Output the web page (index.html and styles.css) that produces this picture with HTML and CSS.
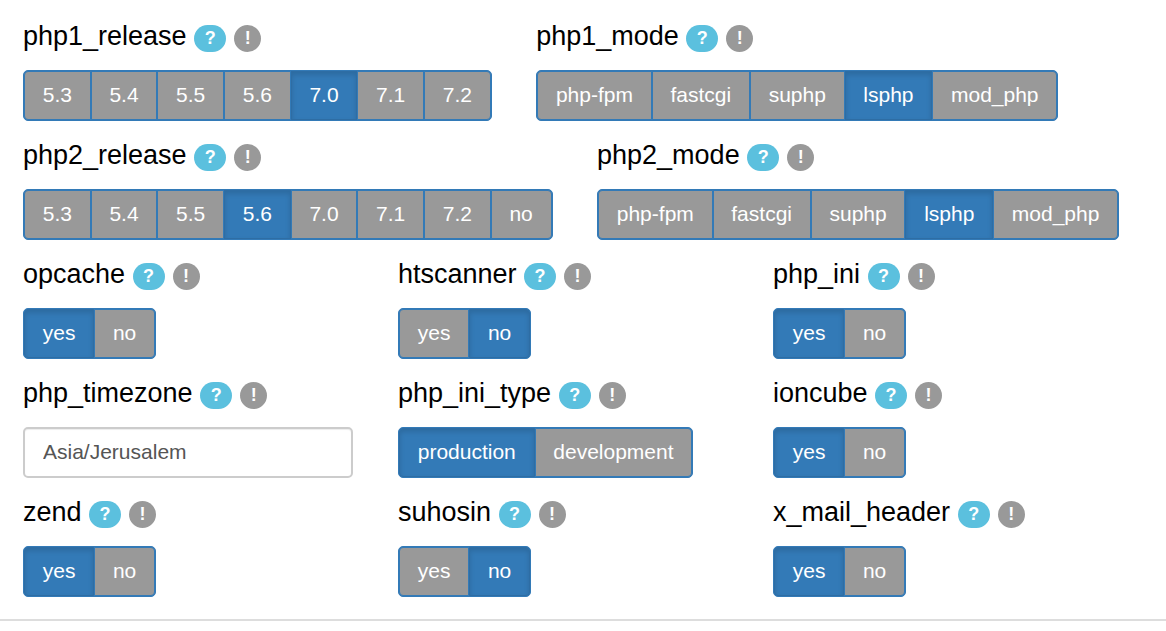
FILE: index.html
```html
<!DOCTYPE html>
<html lang="en">
<head>
<meta charset="utf-8">
<title>PHP settings</title>
<link rel="stylesheet" href="styles.css">
</head>
<body>
<main class="panel">
  <div class="row row-wide">
    <div class="field">
      <div class="label">php1_release <span class="hint">?</span><span class="warn">!</span></div>
      <div class="group"><button>5.3</button><button>5.4</button><button>5.5</button><button>5.6</button><button class="on">7.0</button><button>7.1</button><button>7.2</button></div>
    </div>
    <div class="field">
      <div class="label">php1_mode <span class="hint">?</span><span class="warn">!</span></div>
      <div class="group"><button>php-fpm</button><button>fastcgi</button><button>suphp</button><button class="on">lsphp</button><button>mod_php</button></div>
    </div>
  </div>
  <div class="row row-wide">
    <div class="field">
      <div class="label">php2_release <span class="hint">?</span><span class="warn">!</span></div>
      <div class="group"><button>5.3</button><button>5.4</button><button>5.5</button><button class="on">5.6</button><button>7.0</button><button>7.1</button><button>7.2</button><button>no</button></div>
    </div>
    <div class="field">
      <div class="label">php2_mode <span class="hint">?</span><span class="warn">!</span></div>
      <div class="group"><button>php-fpm</button><button>fastcgi</button><button>suphp</button><button class="on">lsphp</button><button>mod_php</button></div>
    </div>
  </div>
  <div class="row row-thirds">
    <div class="field">
      <div class="label">opcache <span class="hint">?</span><span class="warn">!</span></div>
      <div class="group"><button class="on">yes</button><button>no</button></div>
    </div>
    <div class="field">
      <div class="label">htscanner <span class="hint">?</span><span class="warn">!</span></div>
      <div class="group"><button>yes</button><button class="on">no</button></div>
    </div>
    <div class="field">
      <div class="label">php_ini <span class="hint">?</span><span class="warn">!</span></div>
      <div class="group"><button class="on">yes</button><button>no</button></div>
    </div>
  </div>
  <div class="row row-thirds">
    <div class="field">
      <div class="label">php_timezone <span class="hint">?</span><span class="warn">!</span></div>
      <input class="text" type="text" value="Asia/Jerusalem">
    </div>
    <div class="field">
      <div class="label">php_ini_type <span class="hint">?</span><span class="warn">!</span></div>
      <div class="group"><button class="on">production</button><button>development</button></div>
    </div>
    <div class="field">
      <div class="label">ioncube <span class="hint">?</span><span class="warn">!</span></div>
      <div class="group"><button class="on">yes</button><button>no</button></div>
    </div>
  </div>
  <div class="row row-thirds">
    <div class="field">
      <div class="label">zend <span class="hint">?</span><span class="warn">!</span></div>
      <div class="group"><button class="on">yes</button><button>no</button></div>
    </div>
    <div class="field">
      <div class="label">suhosin <span class="hint">?</span><span class="warn">!</span></div>
      <div class="group"><button>yes</button><button class="on">no</button></div>
    </div>
    <div class="field">
      <div class="label">x_mail_header <span class="hint">?</span><span class="warn">!</span></div>
      <div class="group"><button class="on">yes</button><button>no</button></div>
    </div>
  </div>
</main>
</body>
</html>
```
FILE: styles.css
```css
* { box-sizing: border-box; }
html, body { margin: 0; background: #fff; }
body { font-family: "Liberation Sans", Arial, sans-serif; color: #000; height: 631px; overflow: hidden; }
.panel { height: 621px; padding: 17px 0 0 23px; border-bottom: 2px solid #ddd; }
.row { height: 119px; }
.row-wide { display: flex; gap: 44.5px; }
.row-thirds { display: grid; grid-template-columns: repeat(3, 375px); }
.field { display: block; }
.label { height: 36px; padding-top: 1px; font-size: 27px; line-height: 36px; margin-bottom: 17px; white-space: nowrap; display: block; }
.hint, .warn { display: inline-block; height: 27px; border-radius: 14px; color: #fff; font-size: 18px; font-weight: 700; line-height: 27px; text-align: center; vertical-align: 1px; }
.hint { width: 32px; background: #5bc0de; }
.warn { width: 27px; background: #999; margin-left: 8px; }
.group { display: inline-flex; height: 51px; border: 1px solid #337ab7; border-radius: 5px; overflow: hidden; background: #337ab7; }
.group button { border: 1px solid #337ab7; margin: 0; height: 49px; padding: 0 17.74px 2px; background: #999; color: #fff; font: 21px/1 "Liberation Sans", Arial, sans-serif; }
.group button:first-child { border-radius: 4px 0 0 4px; }
.group button:last-child { border-radius: 0 4px 4px 0; }
.group button.on { background: #337ab7; border-color: #2e6da4; box-shadow: inset 0 3px 5px rgba(0,0,0,.125); }
.text { display: block; width: 330px; height: 51px; padding: 0 18px 2px; border: 2px solid #ccc; border-radius: 5px; color: #555; font: 21px "Liberation Sans", Arial, sans-serif; background: #fff; box-shadow: inset 0 1px 1px rgba(0,0,0,.075); }
```
